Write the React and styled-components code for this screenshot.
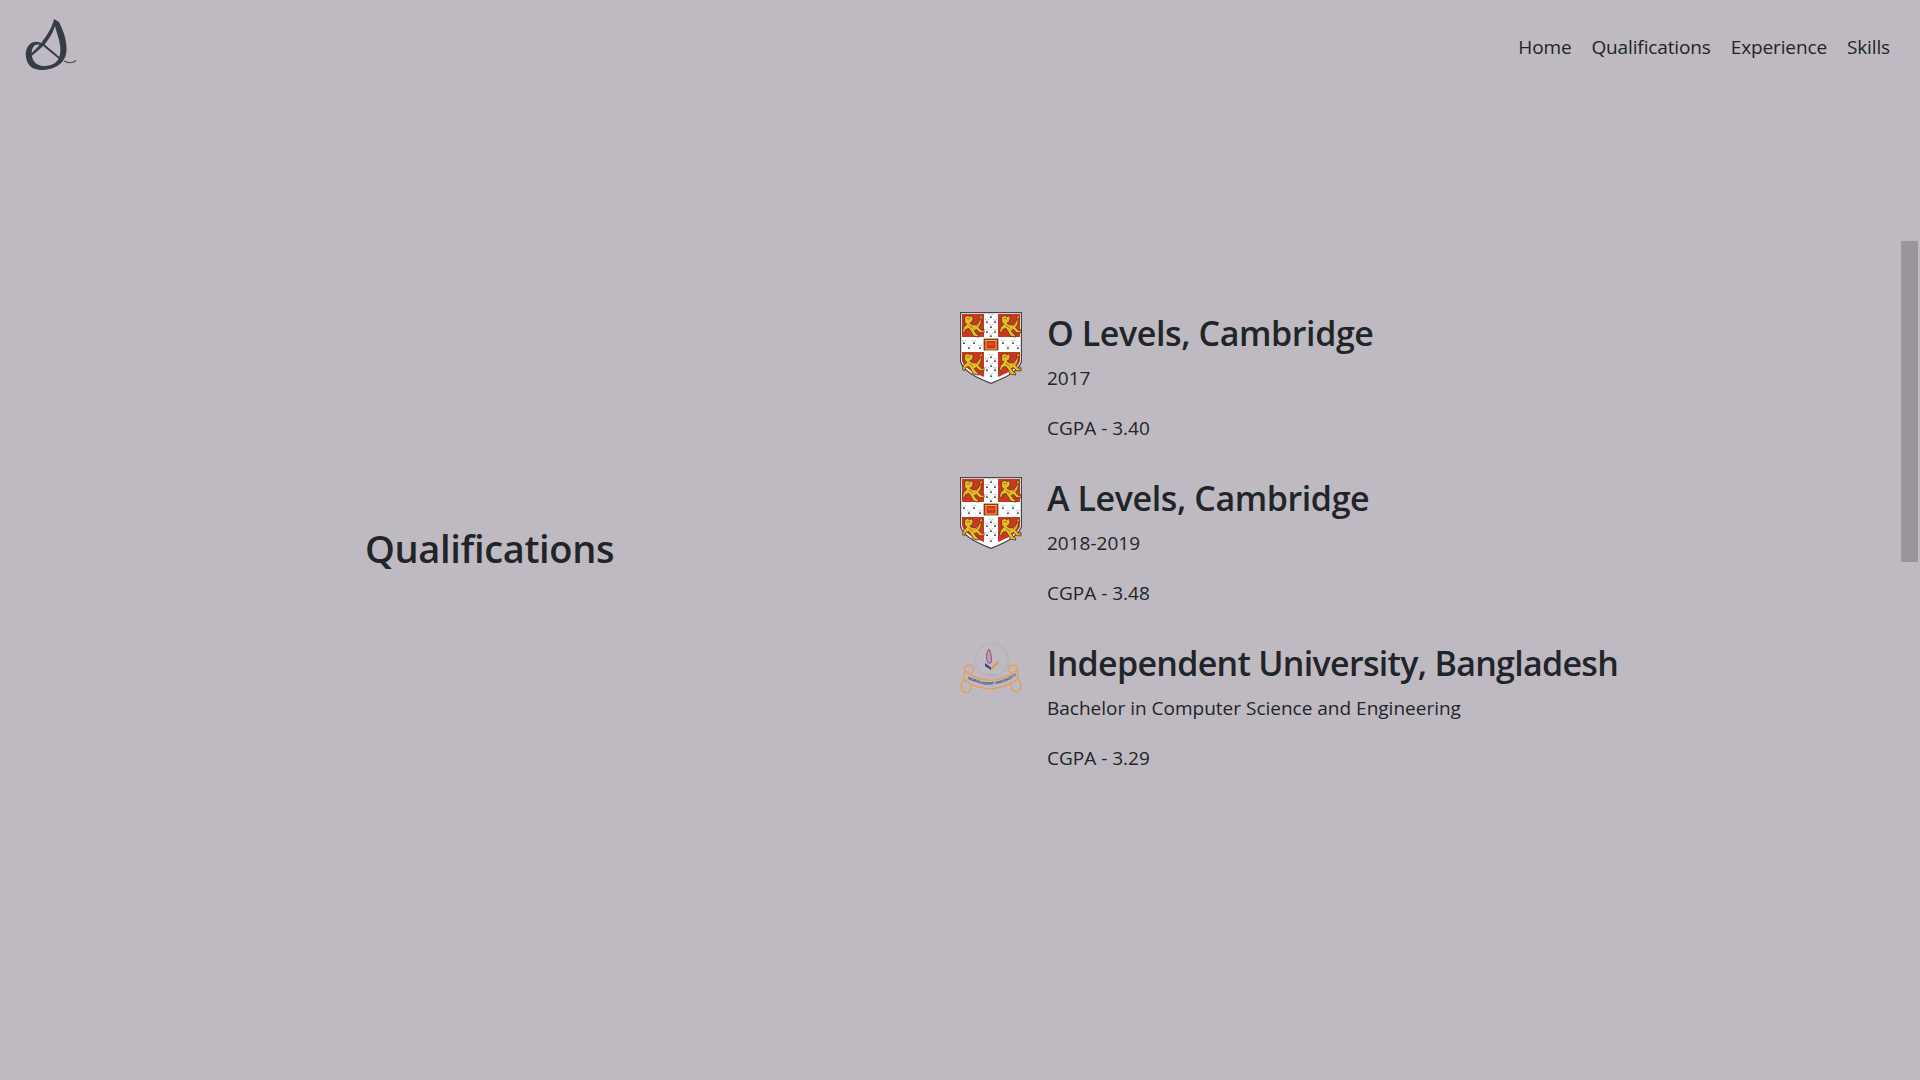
import React from 'react'
import styled, { createGlobalStyle } from 'styled-components'

const Global = createGlobalStyle`
    html, body {
        margin: 0;
        padding: 0;
        height: 100%;
        overflow: hidden;
        background: #bfbac1;
    }
    body {
        font-family: "Open Sans", "Noto Sans", sans-serif;
        color: #212529;
    }
`;

const Page = styled.div`
    position: relative;
    height: 1080px;
    background: #bfbac1;
`;

const Nav = styled.nav`
    display: flex;
    align-items: center;
    justify-content: space-between;
    height: 93px;
    padding: 0 30px 0 20px;
`;

const Logo = styled.svg`
    width: 60px;
    height: 70px;
    display: block;
    align-self: flex-start;
`;

const Menu = styled.ul`
    display: flex;
    gap: 20px;
    margin: 0;
    padding: 0;
    list-style: none;
`;

const MenuItem = styled.li`
    font-size: 19px;
    line-height: 24px;
    letter-spacing: -0.13px;
    color: #212529;
`;

const Section = styled.main`
    display: grid;
    grid-template-columns: 960px 1fr;
    align-items: center;
    height: 910px;
`;

const Heading = styled.h1`
    margin: 0;
    padding-left: 365px;
    font-size: 38px;
    line-height: 48px;
    font-weight: 600;
    letter-spacing: -0.35px;
`;

const List = styled.div`
    display: flex;
    flex-direction: column;
    gap: 25px;
    transform: translateY(-2px);
`;

const Item = styled.article`
    display: flex;
    gap: 25px;
    height: 140px;
`;

const Badge = styled.svg`
    width: 62px;
    height: 72px;
    flex: none;
    display: block;
    margin-top: 1px;
`;

const Title = styled.h2`
    margin: 0 0 11px;
    font-size: 34px;
    line-height: 44px;
    font-weight: 600;
    letter-spacing: ${(p) => p.$tracking}px;
`;

const Line = styled.p`
    margin: 0 0 26px;
    font-size: 19px;
    line-height: 24px;
`;

const ScrollThumb = styled.div`
    position: absolute;
    top: 241px;
    right: 2px;
    width: 17px;
    height: 321px;
    background: #9a949b;
`;

const LogoMark = () => (
    <Logo viewBox="0 0 60 70">
        <path d="M34 19 L39 22 C44 32 47 41 46.500 51 C46 59 41 65 33 68 C25 71 15 71 10 66 C5 61 4 50 9 45 C13 41 18 41 23 44 L21.500 45.500 C17 43.500 14.500 44.500 13 47.500 C10.500 52 11.500 60 16 63.500 C21 67 29 67 35 63 C40 59 41 52 40 45 C39 38 36 31 35 26 C33 33 29 39 25 44 C19 50 14 54 9 58 L8 56.500 C13 52 18 47 22 42 C27 35 32 28 34 19 Z" fill="#353c45" />
        <path d="M24 44 L43 60 L42 61.500 L22.500 45.500 Z" fill="#353c45" />
        <path d="M44 61 C49 63.500 53 63.500 56 60.500" fill="none" stroke="#474d56" strokeWidth="1.100" />
    </Logo>
);

const Lion = ({ x, y }) => (
    <g transform={`translate(${x} ${y}) scale(1.080)`}>
        <path d="M1 1 L4 0 L6 1 L8 0 L9 3 L8 6 L6 7 C8 9 10 9 12 8 C14 7 15 5 15 3 L15 1 L17 0 L18 2 L16 3 C17 6 16 9 14 11 L17 14 L19 13 L19 16 L15 16 L12 13 L10 14 L12 17 L14 18 L14 20 L9 19 L7 15 L5 12 L2 13 L1 16 L-1 15 L0 11 L3 8 L1 6 Z" fill="#e6bb25" stroke="#5a3a14" strokeWidth="0.800" strokeLinejoin="round" />
        <path d="M3 3 L6 3 M5 9 L9 12 M11 10 L14 8" stroke="#8a5a14" strokeWidth="0.700" fill="none" />
    </g>
);

const Spot = ({ x, y }) => (
    <g fill="#2a2a2a">
        <path d={`M${x} ${y} l0.900 3 h-1.800 Z`} />
        <circle cx={x - 1.200} cy={y - 0.400} r="0.400" />
        <circle cx={x + 1.200} cy={y - 0.400} r="0.400" />
    </g>
);

const spots = [
    [31, 3], [27, 8], [35, 8], [31, 13], [27, 18], [35, 18], [31, 22],
    [4, 29], [9, 34], [14, 29], [20, 34],
    [43, 29], [48, 34], [53, 29], [58, 34],
    [31, 43], [27, 47], [35, 47], [31, 52], [27, 56], [35, 56], [31, 62],
];

const Shield = () => (
    <Badge viewBox="0 0 62 72">
        <path d="M0.600 0.600 H61.400 V50 C58 60 44 66 31 71.400 C18 66 4 60 0.600 50 Z" fill="#fff" stroke="#4a4648" strokeWidth="1.200" />
        <path d="M2 2 H24 V25 H2 Z" fill="#cf3524" />
        <path d="M38 2 H60 V25 H38 Z" fill="#cf3524" />
        <path d="M2 40 H24 V65 C14 61 4 56 2 49 Z" fill="#cf3524" />
        <path d="M38 40 H60 V49 C58 56 48 61 38 65 Z" fill="#cf3524" />
        <Lion x={3.500} y={3.500} />
        <Lion x={40.500} y={3.500} />
        <Lion x={3.500} y={41.500} />
        <Lion x={40.500} y={41.500} />
        {spots.map(([x, y]) => <Spot key={`${x}-${y}`} x={x} y={y} />)}
        <rect x="24" y="27" width="14" height="11" fill="#cf3524" stroke="#3a2a10" strokeWidth="0.700" />
        <path d="M25 28.500 H37 M26 28 V37 M36 28 V37 M25.500 37 H36.500" fill="none" stroke="#e6bb25" strokeWidth="1" />
        <path d="M28 32 H34" stroke="#e6bb25" strokeWidth="0.600" />
    </Badge>
);

const IubMark = () => (
    <Badge viewBox="0 0 62 72">
        <defs>
            <path id="ribbonArc" d="M4 34.500 Q30 52 58 32.500" />
        </defs>
        <circle cx="31.500" cy="18" r="16.500" fill="none" stroke="#b5b0b8" strokeWidth="2" strokeDasharray="1.500 1" />
        <path d="M29 7 C26 11 26 17 28 21 L31 21 C32 16 31 11 29 7 Z" fill="#b79fbe" stroke="#8c4a62" strokeWidth="0.900" />
        <path d="M25 21 L31 25.500 L31 28 L25 24 Z" fill="#2b3f9a" />
        <path d="M31 25.500 L38 19 L38 22 L31 28 Z" fill="#f0922a" />
        <text x="31.500" y="33" textAnchor="middle" fontFamily="Liberation Sans, sans-serif" fontSize="2.500" fill="#7f7a88">1993</text>
        <g fill="none" stroke="#ee9a3c" strokeWidth="1.100">
            <path d="M5 29 Q30 48 57 28 L58 37 Q30 56 4 38 Z" />
            <path d="M5 29 C3 24 8 22 12 24 C15 26 14 30 11 31" />
            <path d="M4 38 C0 42 0 50 6 51 C11 50 12 46 10 43" />
            <path d="M57 28 C59 24 54 22 50 24 C47 26 48 30 51 31" />
            <path d="M58 37 C62 41 62 49 56 50 C51 49 50 45 52 42" />
        </g>
        <text fontFamily="Liberation Sans, sans-serif" fontSize="3.900" fontWeight="700" fill="#2b3a80">
            <textPath href="#ribbonArc" startOffset="4">INDEPENDENT UNIVERSITY</textPath>
        </text>
    </Badge>
);

const rows = [
    { mark: <Shield />, title: 'O Levels, Cambridge', tracking: -0.4, detail: '2017', cgpa: 'CGPA - 3.40' },
    { mark: <Shield />, title: 'A Levels, Cambridge', tracking: -0.4, detail: '2018-2019', cgpa: 'CGPA - 3.48' },
    { mark: <IubMark />, title: 'Independent University, Bangladesh', tracking: -0.7, detail: 'Bachelor in Computer Science and Engineering', cgpa: 'CGPA - 3.29' },
];

export default function App() {
    return (
        <Page>
            <Global />
            <Nav>
                <LogoMark />
                <Menu>
                    <MenuItem>Home</MenuItem>
                    <MenuItem>Qualifications</MenuItem>
                    <MenuItem>Experience</MenuItem>
                    <MenuItem>Skills</MenuItem>
                </Menu>
            </Nav>
            <Section>
                <Heading>Qualifications</Heading>
                <List>
                    {rows.map((row) => (
                        <Item key={row.title}>
                            {row.mark}
                            <div>
                                <Title $tracking={row.tracking}>{row.title}</Title>
                                <Line>{row.detail}</Line>
                                <Line>{row.cgpa}</Line>
                            </div>
                        </Item>
                    ))}
                </List>
            </Section>
            <ScrollThumb />
        </Page>
    );
}
